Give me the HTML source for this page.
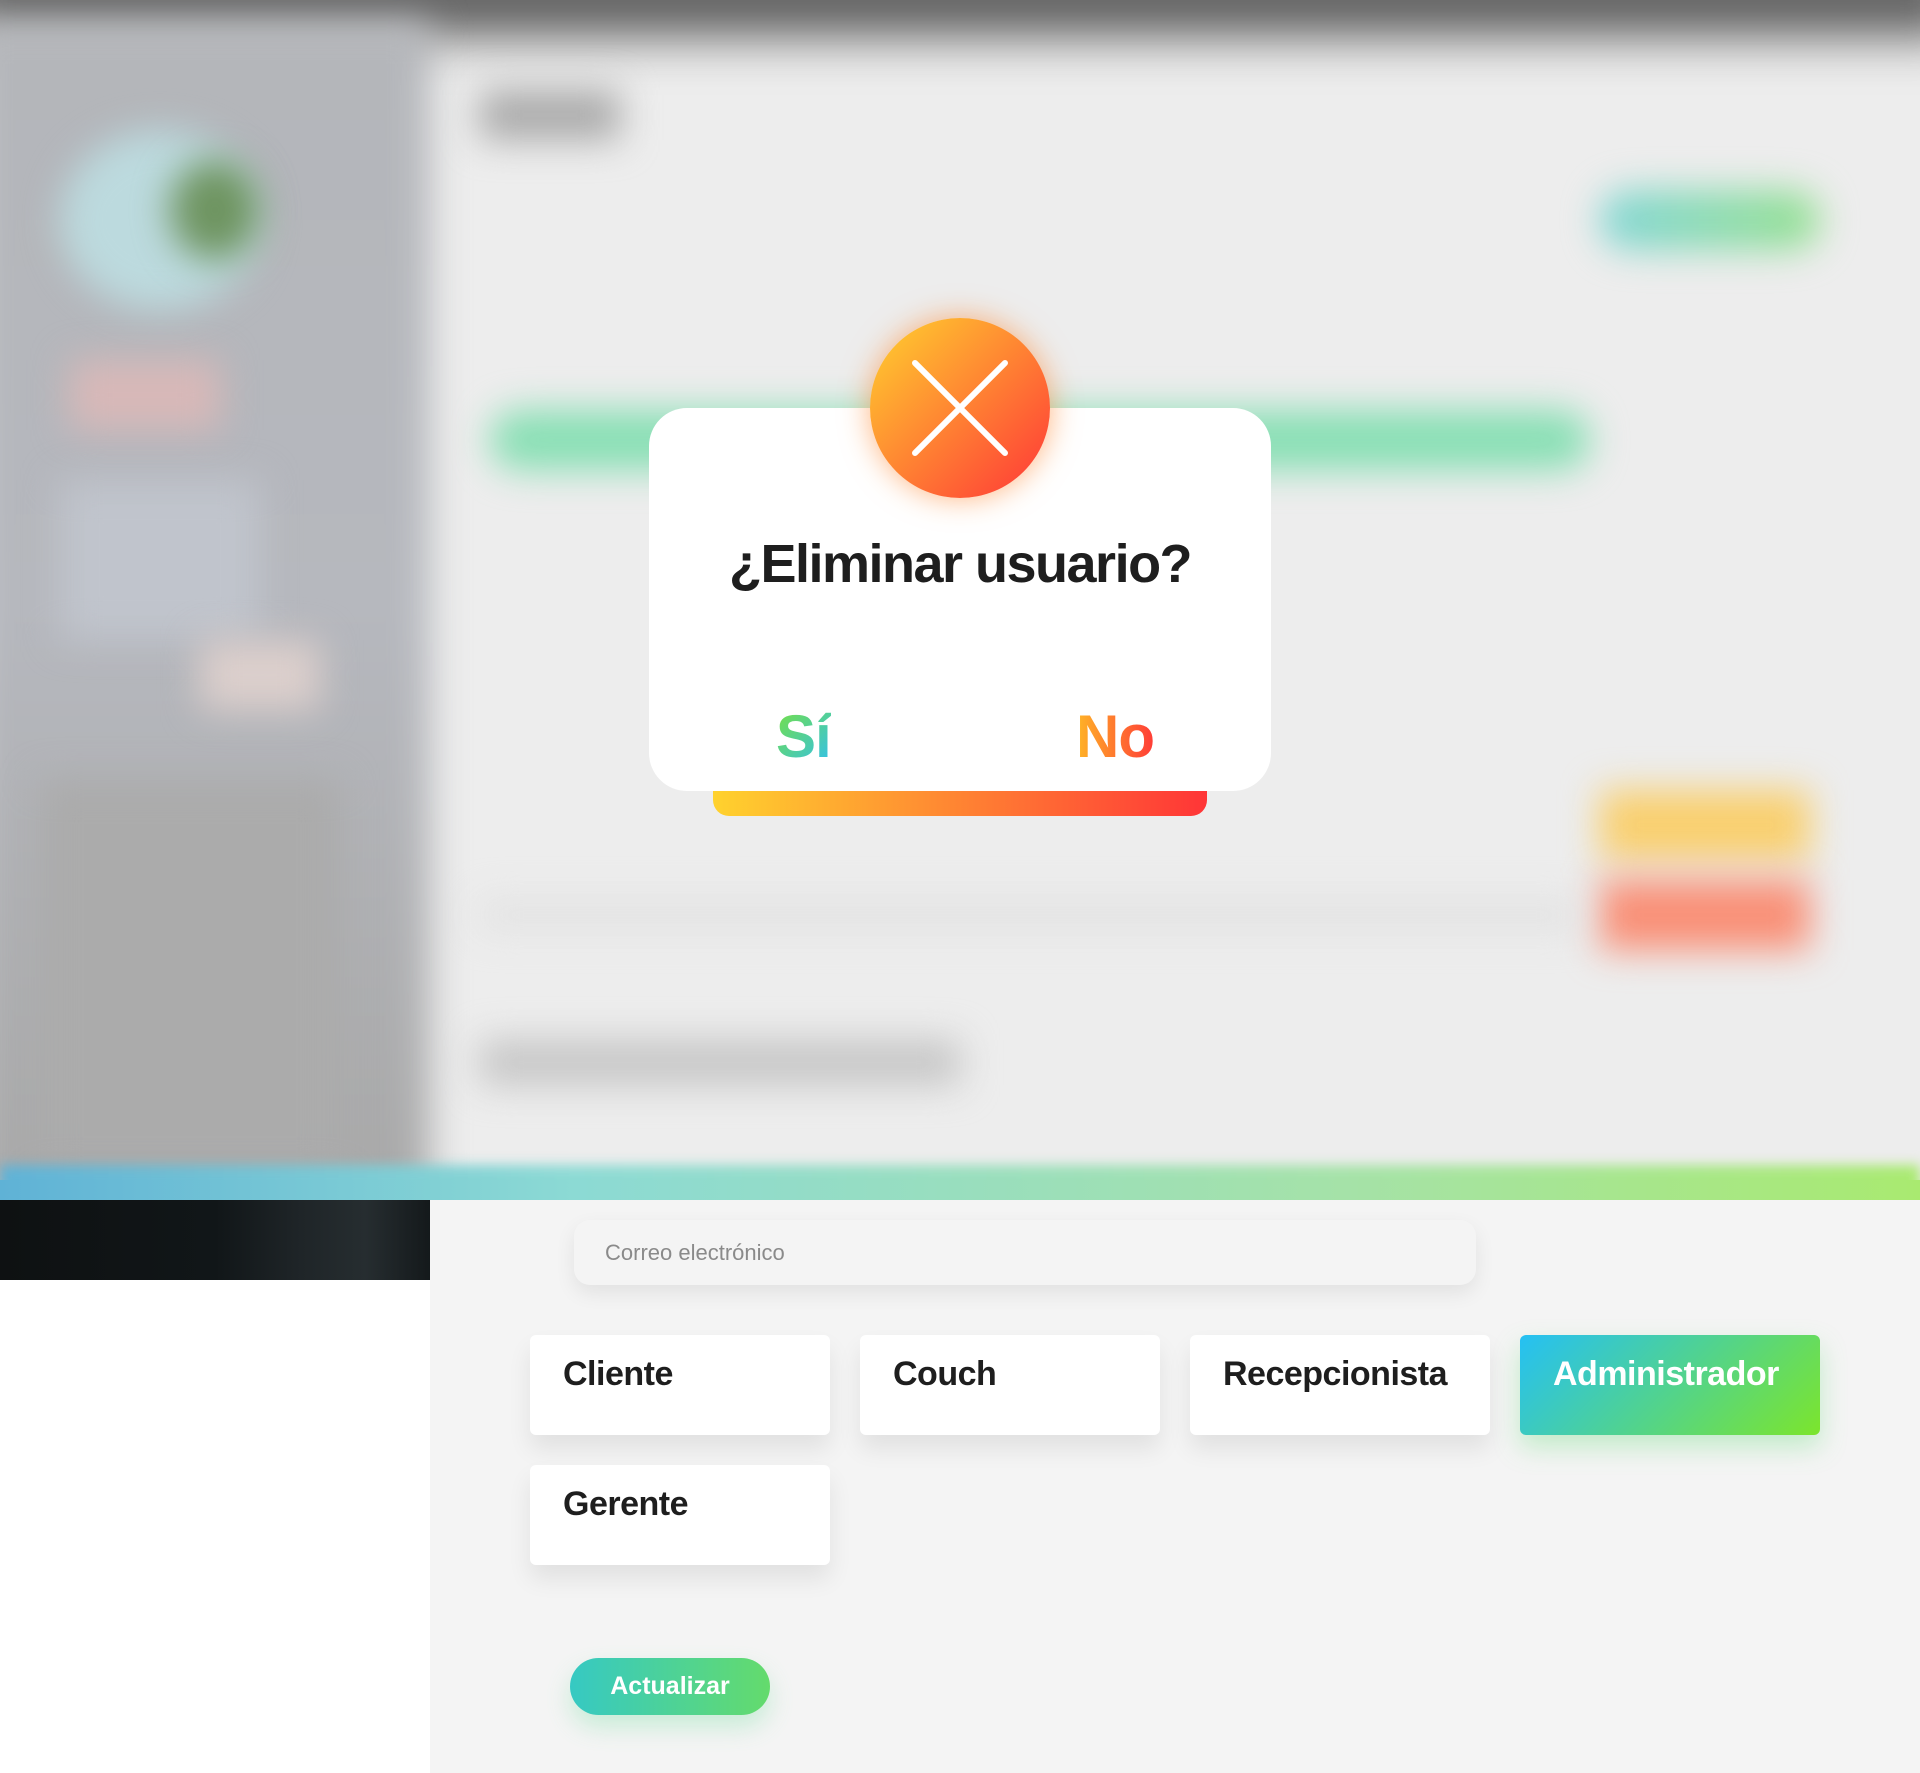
<!DOCTYPE html>
<html><head><meta charset="utf-8"><style>
*{box-sizing:border-box;margin:0;padding:0}
body{width:1920px;height:1773px;position:relative;overflow:hidden;background:#f4f4f4;font-family:"Liberation Sans",sans-serif}
.abs{position:absolute}
.bg{left:0;top:0;width:1920px;height:1200px;overflow:hidden;background:#ededed}
.b{position:absolute;filter:blur(18px)}
.card{position:absolute;width:300px;height:100px;background:#fff;border-radius:6px;box-shadow:0 14px 24px rgba(0,0,0,.08);font-weight:bold;font-size:34px;color:#1e1e1e;padding:20px 0 0 33px;letter-spacing:-0.5px}
</style></head><body>
<div class="abs bg">
  <div class="b" style="left:-40px;top:-40px;width:2000px;height:75px;background:#5a5a5a;filter:blur(25px)"></div>
  <div class="b" style="left:-30px;top:20px;width:460px;height:1180px;background:linear-gradient(180deg,#b4b6ba,#b6b8be 50%,#a9a9a9)"></div>
  <div class="b" style="left:60px;top:130px;width:200px;height:180px;background:#bcdade;border-radius:50%"></div>
  <div class="b" style="left:170px;top:160px;width:90px;height:100px;background:#6e9460;border-radius:50%"></div>
  <div class="b" style="left:70px;top:360px;width:150px;height:70px;background:#d8b8b8"></div>
  <div class="b" style="left:60px;top:480px;width:200px;height:160px;background:#c0c4cc"></div>
  <div class="b" style="left:200px;top:640px;width:120px;height:70px;background:#dccfcc"></div>
  <div class="b" style="left:40px;top:780px;width:300px;height:400px;background:#ababab"></div>
  <div class="b" style="left:480px;top:90px;width:140px;height:50px;background:#aaa"></div>
  <div class="b" style="left:1600px;top:190px;width:220px;height:60px;background:linear-gradient(90deg,#82d6d6,#96e090);border-radius:30px"></div>
  <div class="b" style="left:490px;top:410px;width:1100px;height:60px;background:#88dfb4;border-radius:30px"></div>
  <div class="b" style="left:1600px;top:790px;width:210px;height:70px;background:#f9cf6e"></div>
  <div class="b" style="left:1600px;top:880px;width:210px;height:70px;background:#f98f76"></div>
  <div class="b" style="left:480px;top:1040px;width:480px;height:45px;background:#c6c6c6"></div>
  <div class="b" style="left:480px;top:900px;width:1100px;height:30px;background:#e2e2e2"></div>
  <div class="abs" style="left:0;top:1165px;width:1920px;height:35px;background:linear-gradient(90deg,#5fb2d6,#8cdad4 30%,#a5e2a8 70%,#a9ea70);filter:blur(6px)"></div>
  <div class="abs" style="left:0;top:1180px;width:1920px;height:20px;background:linear-gradient(90deg,#5fb2d6,#8cdad4 30%,#a5e2a8 70%,#a9ea70)"></div>
</div>
<!-- modal -->
<div class="abs" style="left:713px;top:760px;width:494px;height:56px;border-radius:0 0 16px 16px;background:linear-gradient(90deg,#ffd22e,#ff3537)"></div>
<div class="abs" style="left:649px;top:408px;width:622px;height:383px;background:#fff;border-radius:38px"></div>
<div class="abs" style="left:870px;top:318px;width:180px;height:180px;border-radius:50%;background:linear-gradient(135deg,#ffd22e,#ff3537);box-shadow:0 0 30px rgba(255,130,40,.6)"></div>
<svg class="abs" style="left:870px;top:318px" width="180" height="180"><path d="M45 45 L135 135 M135 45 L45 135" stroke="#fff" stroke-width="6" stroke-linecap="round"/></svg>
<div class="abs" style="left:649px;top:533px;width:622px;text-align:center;font-weight:bold;font-size:54px;color:#1e1e1e;letter-spacing:-1.5px">¿Eliminar usuario?</div>
<div class="abs" style="left:776px;top:702px;font-weight:bold;font-size:60px;background:linear-gradient(135deg,#7ae23a,#2ebef5);-webkit-background-clip:text;color:transparent;letter-spacing:-1px">Sí</div>
<div class="abs" style="left:1076px;top:702px;font-weight:bold;font-size:60px;background:linear-gradient(90deg,#ffb526,#ff3c37);-webkit-background-clip:text;color:transparent;letter-spacing:-1px">No</div>
<!-- lower -->
<div class="abs" style="left:0;top:1200px;width:430px;height:80px;background:linear-gradient(90deg,#0e1112,#111618 50%,#1f2528 70%,#262d30 85%,#14191b)"></div>
<div class="abs" style="left:0;top:1280px;width:430px;height:493px;background:#fff"></div>
<div class="abs" style="left:574px;top:1220px;width:902px;height:65px;background:#f4f4f4;border-radius:16px;box-shadow:0 8px 20px rgba(0,0,0,.08);font-size:22px;color:#8a8a8a;padding:20px 0 0 31px">Correo electrónico</div>
<div class="card" style="left:530px;top:1335px">Cliente</div>
<div class="card" style="left:860px;top:1335px">Couch</div>
<div class="card" style="left:1190px;top:1335px">Recepcionista</div>
<div class="card" style="left:1520px;top:1335px;background:linear-gradient(135deg,#25c0f4,#7ce52c);color:#fff;box-shadow:0 12px 26px rgba(100,220,120,.35)">Administrador</div>
<div class="card" style="left:530px;top:1465px">Gerente</div>
<div class="abs" style="left:570px;top:1658px;width:200px;height:57px;border-radius:29px;background:linear-gradient(90deg,#36c9c3,#64db6c);color:#fff;font-weight:bold;font-size:25px;text-align:center;line-height:57px;box-shadow:0 12px 24px rgba(100,220,150,.3)">Actualizar</div>
</body></html>
